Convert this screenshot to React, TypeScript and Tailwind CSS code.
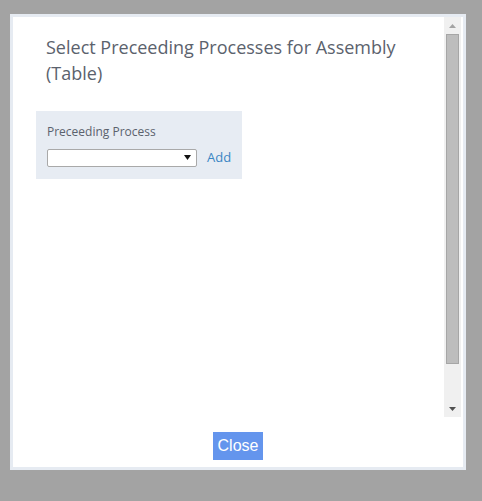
import React from 'react';

export default function App() {
  return (
    <div className="w-[482px] h-[501px] bg-[#a3a3a3] pt-[14px] pl-[10px]" style={{ fontFamily: '"Open Sans", "Noto Sans", sans-serif' }}>
      <div className="w-[456px] h-[456px] border-[3px] border-[#e6ebf2] bg-white flex flex-col">
        <div className="flex h-[400px] pr-[2px]">
          <div className="flex-1">
            <h1 className="pl-[33px] pt-[17px] pr-4 text-[18px] leading-[26px] font-normal text-[#5b626d]">
              Select Preceeding Processes for Assembly (Table)
            </h1>
            <div className="ml-[23px] mt-[25px] w-[206px] h-[68px] bg-[#e7ecf3] pl-[11px] pt-[13px]">
              <div className="text-[12px] leading-[16px] text-[#5b626d]">Preceeding Process</div>
              <div className="flex items-center mt-[8px]">
                <div className="w-[150px] h-[18px] bg-white border border-[#a9a9a9] rounded-[2px] flex items-center justify-end pr-[5px]">
                  <svg width="7" height="5" viewBox="0 0 7 5"><path d="M0 0H7L3.5 5Z" fill="#111" /></svg>
                </div>
                <span className="ml-[10px] text-[13px] text-[#3a86c4]">Add</span>
              </div>
            </div>
          </div>
          <div className="w-[17px] bg-[#f0f0f0] flex flex-col items-center">
            <div className="h-[17px] flex items-center justify-center">
              <svg width="7" height="4" viewBox="0 0 7 4"><path d="M3.5 0L7 4H0Z" fill="#a3a3a3" /></svg>
            </div>
            <div className="w-[13px] h-[330px] bg-[#bdbdbd] border border-[#a6a6a6]" />
            <div className="flex-1" />
            <div className="h-[17px] flex items-center justify-center">
              <svg width="7" height="4" viewBox="0 0 7 4"><path d="M0 0H7L3.5 4Z" fill="#505050" /></svg>
            </div>
          </div>
        </div>
        <div className="flex-1 flex items-start justify-center pt-[15px]">
          <button className="w-[50px] h-[28px] bg-[#6495ed] text-white text-[16px]" style={{ fontFamily: '"Liberation Sans", Arial, sans-serif' }}>
            Close
          </button>
        </div>
      </div>
    </div>
  );
}
